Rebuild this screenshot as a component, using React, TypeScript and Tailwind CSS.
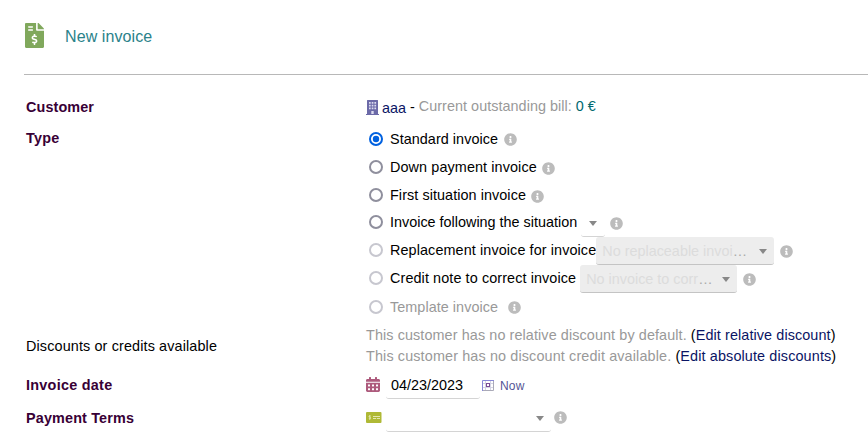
import type { ReactNode } from "react";
import { FaCalendarAlt, FaFileInvoiceDollar, FaInfoCircle } from "react-icons/fa";

function Info({ className = "" }: { className?: string }) {
  return <FaInfoCircle className={`size-[13px] shrink-0 text-[#bcbcbc] ${className}`} />;
}

function Caret({ className = "" }: { className?: string }) {
  return (
    <svg viewBox="0 0 8 5" className={`h-[5px] w-2 shrink-0 ${className}`}>
      <path d="M0 0h8L4 5z" fill="#888" />
    </svg>
  );
}

function Radio({ checked = false, disabled = false, className = "" }: { checked?: boolean; disabled?: boolean; className?: string }) {
  const color = checked ? "#0061e0" : disabled ? "#c7c7cf" : "#8f8f9d";
  return (
    <svg viewBox="0 0 14 14" className={`mr-[7px] ml-[3px] size-3.5 shrink-0 ${className}`}>
      <circle cx="7" cy="7" r="6" fill="#fff" stroke={color} strokeWidth="2" />
      {checked && <circle cx="7" cy="7" r="3.2" fill={color} />}
    </svg>
  );
}

function Row({ label, height, labelClass = "font-bold text-[#380036]", children }: { label?: string; height: string; labelClass?: string; children: ReactNode }) {
  return (
    <div className={`flex items-center ${height}`}>
      <div className={`w-[340px] shrink-0 ${labelClass}`}>{label}</div>
      <div className="flex h-full items-center">{children}</div>
    </div>
  );
}

function DisabledSelect({ text, className }: { text: string; className: string }) {
  return (
    <div className={`mt-0.5 flex h-7 shrink-0 items-center rounded-[3px] border-b border-[#c4c4c4] bg-[#ededed] pr-[7px] pl-[6px] text-[#dcdcdc] ${className}`}>
      <span>{text}</span>
      <span className="text-[#aaa]">…</span>
      <Caret className="mt-0.5 ml-auto" />
    </div>
  );
}

export default function App() {
  return (
    <div className="h-[434px] w-[868px] overflow-hidden bg-white font-['Liberation_Sans',Arial,sans-serif] text-[14.4px] leading-5 whitespace-nowrap text-black">
      <header className="ml-6 flex h-[75px] items-center border-b border-[#b8b8b8]">
        <FaFileInvoiceDollar preserveAspectRatio="none" className="mb-[3px] ml-[1px] h-[25px] w-[19px] text-[#80a85c]" />
        <h1 className="mb-0.5 ml-[21px] pt-px text-[16px] tracking-[0.1px] text-[#2a828a]">New invoice</h1>
      </header>
      <main className="pt-4 pl-[26px]">
        <Row label="Customer" height="h-8" labelClass="font-bold text-[#380036] tracking-[0.1px]">
          <svg viewBox="0 0 13 15" className="h-[15px] w-[13px] shrink-0">
            <path d="M1 .5Q1 0 1.5 0h10q.5 0 .5.5V14h1v1H0v-1h1z" fill="#6c6aa8" />
            <path d="M3 2h1.7v1.7H3zM5.7 2h1.7v1.7H5.7zM8.4 2h1.7v1.7H8.4zM3 4.8h1.7v1.7H3zM5.7 4.8h1.7v1.7H5.7zM8.4 4.8h1.7v1.7H8.4zM3 7.6h1.7v1.7H3zM5.7 7.6h1.7v1.7H5.7zM8.4 7.6h1.7v1.7H8.4zM5.3 11h2.4v3H5.3z" fill="#dcdcf0" />
          </svg>
          <span className="ml-[3px] pt-0.5 text-[#0a1464]">aaa</span>
          <span className="ml-1">-</span>
          <span className="ml-1 pb-0.5 tracking-[0.04px] text-[#999]">Current outstanding bill:</span>
          <span className="ml-1 pb-0.5 text-[#00686e]">0 €</span>
        </Row>
        <Row label="Type" height="h-[30px]" labelClass="font-bold text-[#380036] tracking-[0.25px]">
          <Radio checked className="mt-0.5" />
          <span className="pt-px tracking-[0.05px]">Standard invoice</span>
          <Info className="mt-[3px] ml-1.5" />
        </Row>
        <Row height="h-7">
          <Radio />
          <span className="tracking-[0.1px]">Down payment invoice</span>
          <Info className="mt-0.5 ml-[5px]" />
        </Row>
        <Row height="h-7">
          <Radio />
          <span className="tracking-[0.07px]">First situation invoice</span>
          <Info className="mt-0.5 ml-[5px]" />
        </Row>
        <Row height="h-[27px]">
          <Radio className="mb-px" />
          <span className="pb-px">Invoice following the situation</span>
          <div className="ml-1 flex h-7 w-6 items-center justify-center rounded-[3px] border-b border-[#d4d4d4]"><Caret className="mt-0.5" /></div>
          <Info className="mt-px ml-[5px]" />
        </Row>
        <Row height="h-7">
          <Radio disabled />
          <span className="tracking-[0.1px]">Replacement invoice for invoice</span>
          <DisabledSelect text="No replaceable invoi" className="w-[178px]" />
          <Info className="mt-0.5 ml-1.5" />
        </Row>
        <Row height="h-7">
          <Radio disabled />
          <span className="tracking-[0.1px]">Credit note to correct invoice</span>
          <DisabledSelect text="No invoice to corr" className="ml-1 w-[157px]" />
          <Info className="mt-0.5 ml-1.5" />
        </Row>
        <Row height="h-[29px]">
          <Radio disabled />
          <span className="tracking-[0.05px] text-[#999]">Template invoice</span>
          <Info className="mt-0.5 ml-2.5" />
        </Row>
        <Row label="Discounts or credits available" height="h-[50px]" labelClass="tracking-[0.13px]">
          <div className="leading-[21px] text-[#999]">
            <div className="tracking-[0.096px]">This customer has no relative discount by default. <span className="text-black">(<span className="text-[#0a1464]">Edit relative discount</span>)</span></div>
            <div className="tracking-[0.13px]">This customer has no discount credit available. <span className="text-black">(<span className="text-[#0a1464]">Edit absolute discounts</span>)</span></div>
          </div>
        </Row>
        <Row label="Invoice date" height="h-[28px]" labelClass="font-bold text-[#380036] tracking-[0.27px]">
          <FaCalendarAlt preserveAspectRatio="none" className="mb-0.5 h-[15px] w-3.5 text-[#ad5a7c]" />
          <div className="ml-[6px] flex h-7 w-[94px] items-center rounded-[3px] border-b border-[#d4d4d4] pl-[5px]">04/23/2023</div>
          <svg viewBox="0 0 12 11" className="ml-[2px] h-[11px] w-3">
            <path d="M3.5 1v9M8.5 1v9M1 3.5h10M1 7.5h10" stroke="#d4d4e4" />
            <path d="M11.5 0v10.5H0" fill="none" stroke="#aaaab8" />
            <path d="M.5 11V.5H12" fill="none" stroke="#8888d8" />
            <rect x="4.5" y="3.5" width="3" height="3" fill="#fff" stroke="#7b4b96" />
          </svg>
          <span className="ml-1.5 pt-0.5 text-[12px] tracking-[0.2px] text-[#555596]">Now</span>
        </Row>
        <Row label="Payment Terms" height="h-[37px]" labelClass="font-bold text-[#380036] tracking-[0.15px]">
          <svg viewBox="0 0 16 11" className="h-[11px] w-4">
            <rect width="15.5" height="11" rx="1" fill="#afb936" />
            <path d="M4.7 4.1c-.5-.4-1.8-.3-1.8.4 0 .8 1.9.6 1.9 1.5 0 .8-1.4.9-2 .4M3.8 3v5" fill="none" stroke="#edf0c8" strokeWidth=".7" />
            <path d="M7 4.5h7M7 6.5h3.2M11 6.5h3" stroke="#e4e8b4" />
          </svg>
          <div className="ml-1 flex h-7 w-[165px] items-center rounded-[3px] border-b border-[#d4d4d4] pr-[7px]"><Caret className="mt-0.5 ml-auto" /></div>
          <Info className="ml-[3px]" />
        </Row>
      </main>
    </div>
  );
}
